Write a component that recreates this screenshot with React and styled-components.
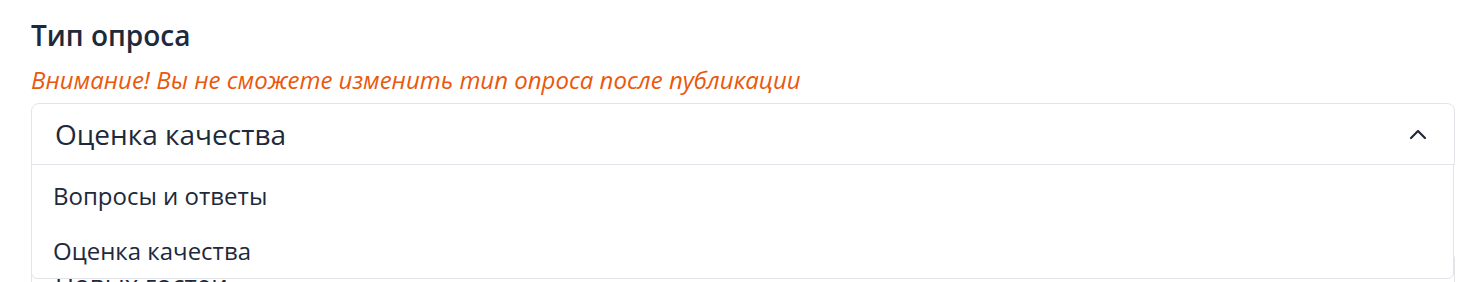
import React from "react";
import styled, { createGlobalStyle } from "styled-components";

const GlobalStyle = createGlobalStyle`
  body {
    margin: 0;
    background: #ffffff;
    font-family: "Open Sans", "Noto Sans", sans-serif;
    color: #1e293b;
  }
`;

const Page = styled.div`
  padding: 18px 29px 0 31px;
  height: 282px;
  box-sizing: border-box;
  overflow: hidden;
`;

const Title = styled.h2`
  margin: 0;
  font-size: 28px;
  line-height: 34px;
  font-weight: 600;
  color: #1e293b;
`;

const Warning = styled.p`
  margin: 12px 0 7px;
  font-size: 24px;
  line-height: 32px;
  font-style: italic;
  color: #ea580c;
`;

const SelectWrap = styled.div`
  position: relative;
`;

const SelectHead = styled.div`
  display: flex;
  align-items: center;
  justify-content: space-between;
  height: 62px;
  box-sizing: border-box;
  padding: 0 27px 0 23px;
  border: 1px solid #e3e4e9;
  border-radius: 8px 8px 0 0;
  font-size: 28px;
  color: #1e293b;
  background: #fff;
`;

const Menu = styled.ul`
  position: absolute;
  left: 0;
  right: 1px;
  top: 61px;
  margin: 0;
  padding: 3px 0 0;
  list-style: none;
  background: #fff;
  border: 1px solid #e3e4e9;
  border-radius: 0 0 6px 6px;
  z-index: 2;
`;

const Option = styled.li`
  padding: 0 21px;
  height: 55px;
  display: flex;
  align-items: center;
  font-size: 24px;
  color: #1e293b;
`;

const NextField = styled.div`
  margin-top: 86px;
  padding: 14px 23px;
  border: 1px solid #e3e4e9;
  border-radius: 8px;
  font-size: 26px;
  line-height: 36px;
  color: #1e293b;
`;

const Chevron = () => (
  <svg width="18" height="12" viewBox="0 0 18 12" fill="none" stroke="#1e293b" strokeWidth="2.2" strokeLinecap="round" strokeLinejoin="round">
    <path d="M2 10l7-7 7 7" />
  </svg>
);

export default function App() {
  return (
    <Page>
      <GlobalStyle />
      <Title>Тип опроса</Title>
      <Warning>Внимание! Вы не сможете изменить тип опроса после публикации</Warning>
      <SelectWrap>
        <SelectHead>
          <span>Оценка качества</span>
          <Chevron />
        </SelectHead>
        <Menu>
          <Option>Вопросы и ответы</Option>
          <Option>Оценка качества</Option>
        </Menu>
      </SelectWrap>
      <NextField>Новых гостей</NextField>
    </Page>
  );
}
